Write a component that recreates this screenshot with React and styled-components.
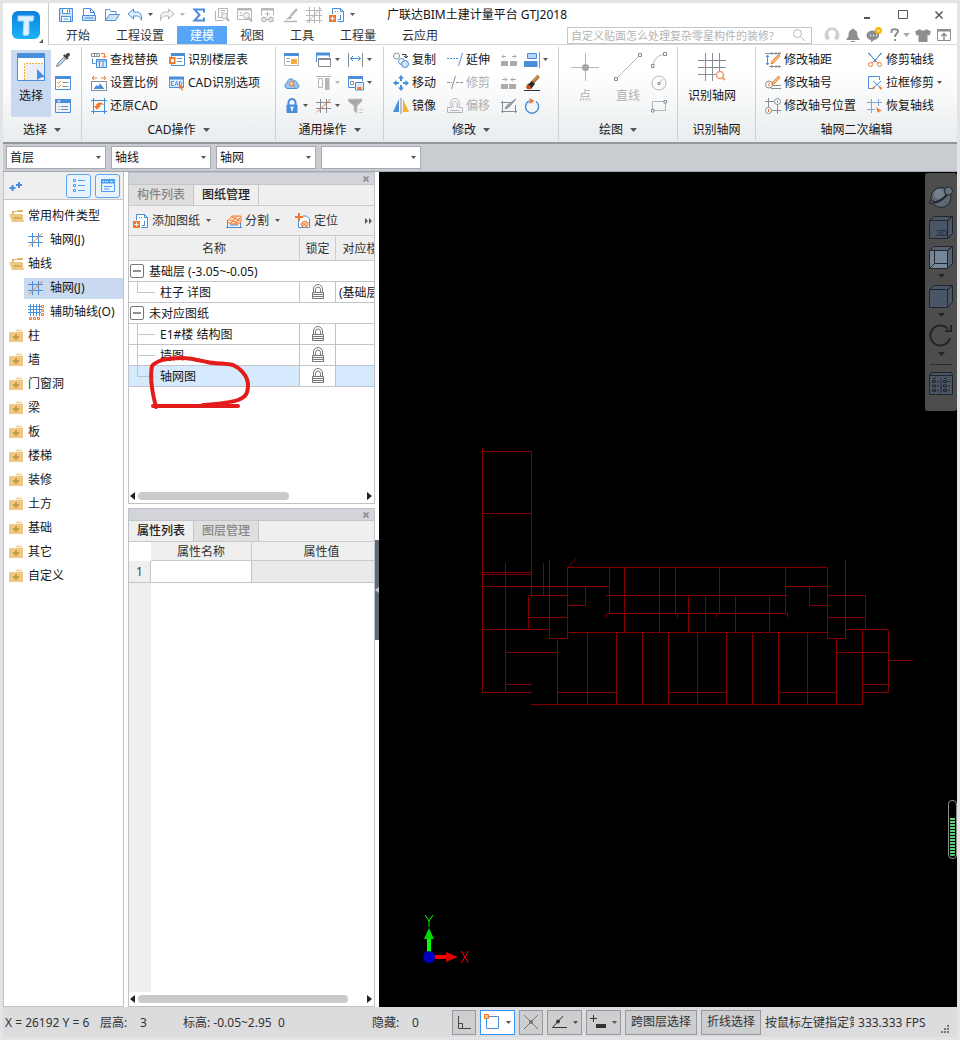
import React from "react"
import styled, { createGlobalStyle } from "styled-components"

const BLUE = "#4a8edb"
const GREY = "#868d94"
const PALE = "#b4b6b9"
const ORANGE = "#f0782c"

const GlobalStyle = createGlobalStyle`
  * {
    box-sizing: border-box;
  }
  body {
    margin: 0;
    font-family: "Noto Sans", "Noto Sans CJK SC", sans-serif;
    font-size: 12px;
    line-height: 20px;
    color: #161616;
  }
  button, input, select {
    font: inherit;
    color: inherit;
    margin: 0;
    padding: 0;
    border: 0;
    background: none;
  }
  svg {
    display: block;
    flex: none;
  }
`

/* ---------- icons, all on a 16px grid ---------- */

const icons = {
  save: (
    <g fill="none" stroke={BLUE}>
      <path d="M1.5 1.5h13v13h-13z" fill="#cfe2f8" />
      <path d="M4.5 1.5h7v5h-7zM3.5 9.5h9v5h-9z" fill="#fff" />
      <path d="M9.5 2.5v3M5.5 12h5" />
    </g>
  ),
  print: (
    <g fill="none" stroke={BLUE}>
      <path d="M2.5 8.5v-7h7l4 4v3" fill="#fff" />
      <path d="M9.5 1.5v4h4" />
      <path d="M1.5 8.5h13v5h-13z" fill="#cfe2f8" />
      <path d="M3.5 11h9" />
    </g>
  ),
  open: (
    <g fill="none" stroke={BLUE} strokeLinejoin="round">
      <path d="M1.5 13.5v-11h4l1.5 2h5v3" />
      <path d="M1.5 13.5l4-6h10l-4 6z" fill="#cfe2f8" />
    </g>
  ),
  undo: <path d="M1 7l5.5-5v3h3c3.5 0 5.500 2.5 5 8.5-1-3.5-2.5-4.5-5-4.5h-3v3z" fill="#e3effc" stroke={BLUE} strokeLinejoin="round" />,
  redo: <path d="M15 7L9.5 2v3h-3C3 5 1 7.5 1.5 13.5c1-3.5 2.5-4.5 5-4.5h3v3z" fill="#f4f4f4" stroke={PALE} strokeLinejoin="round" />,
  sigma: <path d="M13 5.5V2.500H3.500L8.500 8l-5 5.500H13v-3" fill="none" stroke={BLUE} strokeWidth="2" />,
  calcFind: (
    <g fill="none" stroke={PALE}>
      <path d="M4.5 1.500h9v9M1.5 4v9.5h8M4.5 1.5v9h4M6.5 3.5h5M6.5 5.5h2" />
      <circle cx="10.5" cy="9" r="3" fill="#eee" />
      <path d="M12.5 11l2.5 3" strokeWidth="2" />
    </g>
  ),
  tableFind: (
    <g fill="none" stroke={PALE}>
      <path d="M.5 1.5h14v11H.5z" />
      <path d="M1 2.5h13" strokeWidth="2" />
      <path d="M2.5 6h3M2.5 8.5h3" />
      <circle cx="9.5" cy="8.5" r="3" fill="#f2f2f2" />
      <path d="M12 11l3 3.5" strokeWidth="2" />
    </g>
  ),
  tableView: (
    <g fill="none" stroke={PALE}>
      <path d="M1.5 9V1.5h12v7" />
      <path d="M2 2.5h11" strokeWidth="2" />
      <path d="M7.5 4.5v5M5 7h5" />
      <circle cx="4" cy="12.5" r="2.5" fill="#ddd" />
      <circle cx="11" cy="12.5" r="2.5" fill="#ddd" />
      <path d="M6 12.5h3" />
    </g>
  ),
  brush: (
    <g fill="none" stroke={PALE}>
      <path d="M14 2L8 8.5" strokeWidth="2.5" />
      <path d="M8 8.5l-3 3 4-1M1 14.5h13" strokeWidth="1.5" />
    </g>
  ),
  gridPale: <path d="M3.5 0v16M8.5 0v16M13.5 0v16M0 3.500h16M0 8.5h16M0 13.5h16M1 16L15 1" fill="none" stroke={PALE} />,
  addPage: (
    <g fill="none" stroke={BLUE}>
      <path d="M3.5 7V1.5h8l3 3v10h-6" fill="#fff" />
      <path d="M11.5 1.5v3h3" />
      <path d="M6 4.5h3" strokeDasharray="1 1" />
      <path d="M11.5 8v4.5H9" />
      <path d="M0 8h7v7H0z" fill={ORANGE} stroke="none" />
      <path d="M3.5 9.5v4M1.5 11.5h4" stroke="#fff" />
    </g>
  ),
  dropper: (
    <g>
      <path d="M14.5 1.5c-1.5-1-3 0-4 1.5l-1-.7L8 3.800l4 4 1.5-1.5-.7-1c1.5-1 3-2.5 1.7-3.800z" fill="#444" />
      <path d="M8.5 5.5l2 2-6 6-3 1 1-3z" fill="#b9d4f5" stroke="#7e868e" />
    </g>
  ),
  listCheck: (
    <g fill="none" stroke={BLUE}>
      <path d="M.5 1.5h15v13H.5z" fill="#fff" />
      <path d="M0 2.5h16" strokeWidth="3" />
      <path d="M7.5 7.5h6M7.5 11.5h6" stroke={GREY} />
      <path d="M2.5 7l1 1.5L6 6M2.5 11l1 1.5L6 10" stroke="#eda035" />
    </g>
  ),
  listMenu: (
    <g fill="none" stroke={BLUE}>
      <path d="M.5 1.5h15v13H.5z" fill="#e9f2fc" />
      <path d="M0 3h16" strokeWidth="4" />
      <path d="M2 2.5h4l-2 2z" fill="#fff" stroke="none" />
      <path d="M6 8.5h7M6 11.5h7M3.5 8.5h1M3.5 11.5h1" stroke={GREY} />
    </g>
  ),
  findReplace: (
    <g fill="none" stroke={GREY}>
      <path d="M.5 1.5h8v3h-8zM3.5 1.5v3M6 1.5v3" />
      <path d="M10 1.5h3.5v4M11.5 4l2 2 2-2" stroke={ORANGE} />
      <path d="M5.5 7.5h10v8h-10zM5 9h11M8.5 9v6.5M12 9v6.5" stroke={BLUE} fill="#dceafa" />
      <path d="M1.5 6.5v5h3" stroke={BLUE} />
    </g>
  ),
  scale: (
    <g fill="none" stroke={ORANGE}>
      <path d="M1 3h5M10 3h5M3 1L1 3l2 2M13 1l2 2-2 2" />
      <path d="M.5 6.5h15v9H.5z" stroke={GREY} fill="#fff" />
      <path d="M2.5 14l3-4L7 11.5l2-3 4.5 5.5z" fill={BLUE} stroke="none" />
    </g>
  ),
  restore: (
    <g fill="none" stroke={BLUE}>
      <path d="M2.5 0v16M13.5 0v16M0 2.5h16M0 13.5h16" />
      <path d="M5.500 11.5L3 8h2c0-4 6-5 8-1-2-1-4-.5-4.5 1H10z" fill={ORANGE} stroke="none" />
    </g>
  ),
  floorTable: (
    <g fill="none" stroke={BLUE}>
      <path d="M2.5 1.5h13v12h-13z" fill="#fff" />
      <path d="M2 2.5h14" strokeWidth="3" />
      <path d="M8 6.5h5M8 9.5h5" stroke={GREY} />
      <path d="M0 5h6.5v7H0z" fill={ORANGE} stroke="none" />
      <path d="M2 7h3v3H2z" fill="#fff" stroke="none" />
    </g>
  ),
  cadOption: (
    <g fill="none" stroke={BLUE}>
      <path d="M.5 2.5h14v10H.5z" fill="#dceafa" />
      <path d="M0 3h15" strokeWidth="3" />
      <path d="M5 6.5H2.5v4H5M6 10.5l1.5-4 1.500 4M10.5 6.5v4c3 0 3-4 0-4z" />
      <path d="M10 9l5 3-2 .5 1 2.5-1.5.5-1-2.5-1.5 1z" fill={ORANGE} stroke="none" />
    </g>
  ),
  panelOrange: (
    <g fill="none" stroke={PALE}>
      <path d="M.5 1.5h14v12H.5z" fill="#fff" />
      <path d="M0 2.5h15" stroke={BLUE} strokeWidth="3" />
      <path d="M2.5 6.5h3M2.5 9.5h3" stroke={GREY} />
      <path d="M7 7h6v5H7z" fill="#f8ab3c" stroke="none" />
    </g>
  ),
  cloudFind: (
    <g>
      <path d="M4 13.5c-4 0-4-5-.8-5.5C3 4 8 2 10 6c3-.5 3.5 2 3 2.500 2.5.5 2.5 5-.5 5z" fill="#9dc3f0" stroke={BLUE} />
      <circle cx="7.5" cy="8.5" r="2" fill="#f6d2b6" stroke={ORANGE} />
      <path d="M9 10l2.5 2" stroke={ORANGE} />
    </g>
  ),
  lockBlue: (
    <g>
      <path d="M4.500 7V4.500a3.500 3.500 0 0 1 7 0V7" fill="none" stroke={BLUE} strokeWidth="2" />
      <rect x="2.5" y="6.5" width="11" height="8.500" rx="1" fill={BLUE} />
      <path d="M8 9v4M6.5 9.5h3" stroke="#fff" strokeWidth="1.5" />
    </g>
  ),
  windows: (
    <g fill="none" stroke={BLUE}>
      <path d="M.5 10V1.5h13V5" />
      <path d="M0 2h14" strokeWidth="3" />
      <path d="M2.5 6.5h12v8h-12z" stroke={GREY} fill="#fff" />
      <path d="M2 7h13" stroke={GREY} strokeWidth="2" />
    </g>
  ),
  alignTop: (
    <g fill="none" stroke={PALE}>
      <path d="M0 1.5h15M2.5 3.5h4v9h-4z" />
      <path d="M9 3h4.500v12H9z" fill={PALE} stroke="none" />
    </g>
  ),
  gridSlash: (
    <g fill="none">
      <path d="M4.5 1v14M10.5 1v14M0 4.5h15M0 10.5h15" stroke={GREY} />
      <path d="M1 14.5L14.5 1" stroke={ORANGE} />
    </g>
  ),
  measure: (
    <g fill="none" stroke={BLUE}>
      <path d="M.5 1v14M14.5 1v14" stroke={GREY} />
      <path d="M2 6.5h11M5 4L2.5 6.5 5 9M10 4l2.5 2.5L10 9" />
    </g>
  ),
  savePanel: (
    <g fill="none" stroke={BLUE}>
      <path d="M7 12.5H.5v-11h14V6" fill="#fff" />
      <path d="M0 2.5h15" strokeWidth="3" />
      <path d="M2.5 6.5h3v3h-3z" stroke={GREY} />
      <path d="M7.5 7.5h8V15h-8z" fill="#dceafa" />
      <path d="M9.5 12h4v3h-4z" fill={ORANGE} stroke="none" />
    </g>
  ),
  funnel: <path d="M0 1h14v2L9 8v7l-3-2V8L0 3zM11 11.5h4M11 14.5h4" fill="#a6a8aa" stroke="#c8c8c8" />,
  copy: (
    <g fill="none" stroke={GREY}>
      <circle cx="3.5" cy="4" r="3" />
      <path d="M9 2.5h4v3M11 4l2 2 2-2" stroke="#333" />
      <circle cx="8.5" cy="9.5" r="3" stroke={BLUE} />
      <circle cx="12" cy="12" r="3.5" stroke={BLUE} fill="#cfe2f8" />
    </g>
  ),
  move: (
    <g fill={BLUE}>
      <path d="M8 0l3 3.5H9V6H7V3.500H5zM8 16l3-3.500H9V10H7v2.500H5zM0 8l3.5-3v2H6v2H3.500v2zM16 8l-3.5-3v2H10v2h2.500v2z" />
    </g>
  ),
  mirror: (
    <g>
      <path d="M6 1v13H0z" fill={BLUE} />
      <path d="M10 1v13h6z" fill="#f7b32b" />
      <path d="M8 0v16" stroke={GREY} />
    </g>
  ),
  extend: (
    <g fill="none" stroke={BLUE}>
      <path d="M0 6.5h11" strokeDasharray="2 1" />
      <path d="M15.5 1l-4 13" />
    </g>
  ),
  trim: (
    <g fill="none" stroke="#8b8e92">
      <path d="M0 7.5h5M9 7.5h7" strokeDasharray="3 1" />
      <path d="M8.5 1l-4 13" />
    </g>
  ),
  offset: (
    <g fill="none" stroke={PALE}>
      <path d="M.5 14.5v-5h4C2 4 5 .5 8 .5s6 3.5 3.5 9h4v5z" />
      <path d="M3.5 12.5h9M6.5 9.5c-2-4 0-6 1.5-6s3.5 2 1.5 6" />
    </g>
  ),
  breakTwo: (
    <g fill="#a9abad">
      <path d="M0 9h7v5H0zM9 9h7v5H9z" />
      <path d="M1 4.5h4M11 4.5h4M3 2.5l-2 2 2 2M13 2.5l2 2-2 2" fill="none" stroke="#a9abad" />
    </g>
  ),
  joinTwo: (
    <g fill="#a9abad">
      <path d="M0 9h7v5H0zM8 9h7v5H8z" />
      <path d="M1 4.5h5M10 4.5h5M4 2.5l2 2-2 2M12 2.500l-2 2 2 2" fill="none" stroke="#a9abad" />
    </g>
  ),
  editFrame: (
    <g fill="none" stroke={GREY}>
      <path d="M0 4.500h10M1.5 3v12M0 13.5h16M14.5 7v8" />
      <path d="M15 1L8 9l-4 2 2-3.500z" fill="#a9abad" />
    </g>
  ),
  alignRight: (
    <g>
      <path d="M3.500 1.5h9v5h-9z" fill="#b7d3f5" stroke={BLUE} />
      <path d="M0 9h13.500v6H0z" fill={BLUE} />
      <path d="M15.5 0v16" stroke={GREY} />
    </g>
  ),
  broom: (
    <g>
      <path d="M14.5 1L8 8" stroke="#a9733a" strokeWidth="3.5" />
      <path d="M15 0L8 7" stroke="#f3b45a" />
      <path d="M8 6l3 3-4 5H3v-4z" fill="#2c2c2c" />
      <path d="M3 9.5l3 1 1 3c-2 1.5-4 1-5-1z" fill="#d9481e" />
      <path d="M0 15.5h16" stroke="#333" />
    </g>
  ),
  rotate: (
    <g>
      <path d="M5 3a6.500 6.500 0 1 0 7 .5" fill="none" stroke={BLUE} strokeWidth="1.5" />
      <path d="M5.500 0l5 3-5 3z" fill={ORANGE} />
    </g>
  ),
  arc: (
    <g fill="none" stroke={PALE}>
      <path d="M2 13C3 7 7 3 13 2.5" />
      <path d="M.5 12.5H3v3H.5zM12.5.5h3v3h-3z" fill="#fff" stroke={GREY} />
    </g>
  ),
  circle: (
    <g fill="none" stroke={PALE}>
      <circle cx="8" cy="8" r="7" />
      <path d="M8 8l4-4" />
      <path d="M7 7.500h2v2H7z" stroke={GREY} />
    </g>
  ),
  rect: (
    <g fill="none" stroke={PALE}>
      <path d="M1.5 3.5h13v9h-13z" />
      <path d="M.5 11.500H3V14H.5zM13 2.500h2.500V5H13z" fill="#fff" stroke={GREY} />
    </g>
  ),
  axisDistance: (
    <g fill="none" stroke={GREY}>
      <path d="M0 1.5h16M7 0v3M11 0v3M14 0v3M4 14.5h12M7 13v3M11 13v3M14 13v3" />
      <path d="M2.5 3v10M1 5l1.5-2L4 5M1 11l1.5 2L4 11" stroke={BLUE} />
      <path d="M13.5 2.5L15 4l-6.500 7L6 12l.8-2.500z" fill="#f8c77e" stroke={ORANGE} />
    </g>
  ),
  axisNumber: (
    <g fill="none" stroke={GREY}>
      <circle cx="4" cy="9.5" r="3.5" fill="#fff" />
      <path d="M4 7.5v4" stroke={ORANGE} />
      <path d="M7.5 10.5H16M6 13.5h10" />
      <path d="M13.5 1L15 2.500l-5.500 6L7 9.500 7.800 7z" fill="#f8c77e" stroke={ORANGE} />
    </g>
  ),
  axisPosition: (
    <g fill="none" stroke={GREY}>
      <path d="M0 3.5h9M3.5 0v9M12.5 6v10M7 12.5h9" />
      <circle cx="12.5" cy="3.5" r="3" fill="#fff" />
      <circle cx="3.5" cy="12.5" r="3" fill="#fff" />
      <path d="M12.5 2v3M3.5 11v3" stroke={ORANGE} />
    </g>
  ),
  scissors: (
    <g fill="none" stroke={BLUE}>
      <path d="M1 1l10 10M15 1L5 11M2 1l7 9M14 1L7 10" />
      <circle cx="3.5" cy="12.5" r="2" stroke={ORANGE} />
      <circle cx="12.5" cy="12.5" r="2" stroke={ORANGE} />
      <path d="M5 11l2-2M11 11L9 9" stroke={ORANGE} />
    </g>
  ),
  frameCut: (
    <g fill="none" stroke={BLUE}>
      <path d="M5 13.5H1.5v-12h11V5" />
      <path d="M6 6l8 7M14 6l-8 7" />
      <path d="M5.5 14l2-2M14.5 14l-2-2" stroke={ORANGE} strokeWidth="2" />
    </g>
  ),
  axisRestore: (
    <g fill="none" stroke="#7ea6d6">
      <path d="M4.5 1v14M11.5 1v7M0 4.5h15M0 11.5h8" />
      <path d="M9 9l6 4-2.5.5L11 15z" fill={ORANGE} stroke="none" />
    </g>
  ),
  axis: (
    <g fill="none" stroke={BLUE}>
      <path d="M4.5 1v14M10.5 1v14M0 4.5h15M0 10.5h15" />
      <path d="M1 14.5L14.5 1" stroke={ORANGE} />
    </g>
  ),
  axisAux: (
    <g fill="none" stroke={BLUE}>
      <path d="M2.500 0v12M5.5 0v12M8.5 0v12M11.5 0v12M0 2.5h13M0 5.5h13M0 8.5h13" />
      <path d="M13.5 1.5h2v2h-2zM13.5 5.5h2v2h-2zM13.5 9.5h2v2h-2zM1.5 13.5h2v2h-2zM5.5 13.5h2v2h-2zM9.5 13.5h2v2h-2z" stroke={ORANGE} />
    </g>
  ),
  folderOpen: (
    <g>
      <path d="M3 3h5l1-1h5v10H3z" fill="#e0b46c" />
      <path d="M5 4h9v3H5z" fill="#fff" />
      <path d="M0 6h13l2 8H3z" fill="#efc883" />
      <path d="M5 9h7v2H5z" fill="#d5a85c" />
    </g>
  ),
  folder: (
    <g>
      <path d="M7 1.500h6v2H7z" fill="#f4d9a8" />
      <path d="M0 4h14v10H0z" fill="#efc883" />
      <path d="M7 6v6M4 9h6" stroke="#c69a49" strokeWidth="2" />
    </g>
  ),
  plusPlus: <path d="M3.500 7v6M.5 10h6M10 4v6M7 7h6" fill="none" stroke={BLUE} strokeWidth="2" />,
  listView: (
    <g fill="none" stroke="#4f9ff0">
      <path d="M2.5 1.500h2v2h-2zM2.5 6.500h2v2h-2zM2.5 11.500h2v2h-2zM7 2.500h7M7 7.500h7M7 12.500h7" />
    </g>
  ),
  panelView: (
    <g fill="none" stroke="#4f9ff0">
      <path d="M1.5 1.5h13v12h-13z" />
      <path d="M1 3.5h14" strokeWidth="4" />
      <path d="M3 3.500h1M5 3.500h1M7 3.500h1M10.5 3.500h2" stroke="#fff" />
      <path d="M4 8.5h8M4 11h5" />
    </g>
  ),
  split: (
    <g fill="none" stroke={BLUE}>
      <path d="M1.5 7v7.500h13V7" />
      <path d="M0 14.5h16M4 12h8" />
      <path d="M1 9l5-6h9v6l-3 2H6z" fill="#fbe0c9" stroke={ORANGE} />
      <path d="M4 7l8 3M6 4l8 4M5 10l6-7M9 11l5-6" stroke={ORANGE} />
    </g>
  ),
  locate: (
    <g fill="none" stroke={BLUE}>
      <path d="M3.5 6v8.500h11V6l-3-3H8" fill="#fff" />
      <path d="M4 0v8M0 4h8" stroke={ORANGE} strokeWidth="2" />
      <path d="M6 12c0-4 6-5 7-2 1 3-3 5-5 4z" fill="#fbe0c9" stroke={ORANGE} />
      <path d="M7 13l5-4M7 10l5 3" stroke={ORANGE} />
    </g>
  ),
  lock: (
    <g fill="none" stroke="#777">
      <path d="M3.5 8V5a4 4 0 0 1 9 0v3M5.5 8V5.500a2 2 0 0 1 5 0V8" />
      <path d="M2.500 8.500h11v6h-11zM3 10.500h10M3 12.500h10" />
    </g>
  ),
  ortho: <path d="M2.5 2v12.500H15M2.5 9.500h4v5" fill="none" stroke="#444" />,
  snap: (
    <g fill="none" stroke={BLUE}>
      <path d="M2.5 2.5h12v12h-12z" />
      <path d="M.5.5h4v4h-4z" fill="#fac39b" stroke={ORANGE} />
    </g>
  ),
  cross: (
    <g stroke="#777" fill="#777">
      <path d="M1 1l14 14M15 1L1 15" />
      <circle cx="8" cy="8" r="1.5" />
    </g>
  ),
  angle: (
    <g stroke="#333" fill="#333">
      <path d="M12 2L1.500 13.500H16" fill="none" />
      <circle cx="7" cy="7.500" r="1.500" />
    </g>
  ),
  plusInput: (
    <g>
      <path d="M3.5 1v7M0 4.5h7" stroke="#333" />
      <path d="M6 10h10v4H6z" fill="#333" />
    </g>
  ),
  avatar: (
    <g>
      <circle cx="8" cy="8" r="7.5" fill="#cfcfcf" />
      <path d="M8 3c-5 0-4 6-2 8l-3 2.500c3 2.500 7 2.500 10 0L10 11c2-2 3-8-2-8z" fill="#fff" />
    </g>
  ),
  bell: <path d="M8 1l1 1.5c3 1 3.5 3 3.5 7l2 2.5v1h-13v-1l2-2.5c0-4 .5-6 3.5-7zM6 14h4v1H6z" fill="#8e8e8e" />,
  chat: (
    <g>
      <path d="M7 3.5c8 0 8 9 1 9.500L5 15.500V13C-1.500 12-1 3.500 7 3.500z" fill="#8e8e8e" />
      <path d="M4 8.500h1M7 8.500h1M10 8.500h1" stroke="#fff" strokeWidth="1.5" />
      <circle cx="12.5" cy="3.5" r="3.5" fill="#f7b500" />
      <path d="M11 2.5l1.5 2 1.5-2" stroke="#fff" fill="none" />
    </g>
  ),
  help: (
    <g fill="none" stroke="#8e8e8e" strokeWidth="2">
      <path d="M4.500 6V4c0-2.500 6.500-2.500 6.500 0 0 2.500-3 2.500-3 6M8 12v2" />
    </g>
  ),
  shirt: <path d="M5 2c1 2 5 2 6 0l5 2.5-1.500 4-2-.5v7h-9V8l-2 .5L0 4.500z" fill="#8e8e8e" />,
  upBox: (
    <g fill="none" stroke="#8e8e8e">
      <path d="M1.5 2.5h13v11h-13z" />
      <path d="M1 3.5h14" strokeWidth="2" />
      <path d="M8 13V7M5.500 9L8 6.500 10.500 9" strokeWidth="1.5" />
    </g>
  ),
  find: (
    <g fill="none" stroke="#b5b5b5">
      <circle cx="6.5" cy="6.5" r="4" />
      <path d="M9.5 9.5L14 14" />
    </g>
  ),
  minimise: <path d="M5 11h6" stroke="#555" strokeWidth="2" />,
  maximise: <path d="M3.5 3.5h9v8h-9z" fill="none" stroke="#555" />,
  close: <path d="M4.5 4.500l7 7M11.5 4.5l-7 7" stroke="#555" strokeWidth="1.5" />,
}

const Icon = ({ name }) => (
  <svg width="16" height="16" viewBox="0 0 16 16" aria-hidden="true">
    {icons[name]}
  </svg>
)

const Caret = ({ color = "#555", big }) => (
  <svg width={big ? 7 : 5} height={big ? 4 : 3} viewBox="0 0 7 4" aria-hidden="true">
    <path d="M0 0h7L3.5 4z" fill={color} />
  </svg>
)

/* ---------- frame and title ---------- */

const Frame = styled.div`
  display: flex;
  flex-direction: column;
  min-height: 100vh;
  border: 3px solid #e4e4e6;
  background: #fff;
`

const Header = styled.header`
  display: flex;
`

const LogoButton = styled.button`
  width: 46px;
  display: flex;
  align-items: center;
  justify-content: center;
  padding: 3px 0 0 3px;
  border-right: 1px solid #c8c8c8;
`

const HeaderRows = styled.div`
  flex: 1;
  min-width: 0;
  border-bottom: 1px solid #d6d6d6;
`

const TitleRow = styled.div`
  display: flex;
  align-items: center;
  height: 23px;
  padding-left: 5px;
`

const QuickButton = styled.button`
  display: flex;
  align-items: center;
  justify-content: center;
  width: ${(p) => (p.$narrow ? 9 : 23)}px;
  height: 20px;
`

const Title = styled.h1`
  flex: 1;
  margin: 0 0 0 30px;
  font-size: 12px;
  font-weight: 400;
  color: #111;
  white-space: nowrap;
`

const WindowButton = styled.button`
  display: flex;
  align-items: center;
  justify-content: center;
  width: 36px;
  height: 20px;
`

const TabRow = styled.div`
  display: flex;
  align-items: center;
  height: 18px;
  padding: 0 5px 0 4px;
`

const RibbonTab = styled.button`
  height: 18px;
  padding: 2px 13px 0;
  line-height: 16px;
  white-space: nowrap;
  color: ${(p) => (p.$active ? "#fff" : "#333")};
  background: ${(p) => (p.$active ? "#57a5f6" : "transparent")};
  border-radius: 1px 1px 0 0;
`

const SearchBox = styled.label`
  display: flex;
  align-items: center;
  width: 245px;
  height: 17px;
  margin: 0 12px 0 auto;
  padding: 0 4px 0 3px;
  border: 1px solid #c6c6c6;
  font-size: 11px;
  input {
    flex: 1;
    min-width: 0;
    height: 15px;
    outline: 0;
    line-height: 15px;
  }
  input::placeholder {
    color: #b4b4b4;
    opacity: 1;
  }
`

const UserTools = styled.div`
  display: flex;
  align-items: center;
  gap: 5px;
`

const ToolButton = styled.button`
  display: flex;
  align-items: center;
`

/* ---------- ribbon ---------- */

const Ribbon = styled.div`
  display: flex;
  height: 99px;
  padding: 2px 0;
  border-bottom: 2px solid #92979f;
  background: linear-gradient(#fff 30%, #e8ecee);
`

const Group = styled.section`
  display: flex;
  flex-direction: column;
  flex: ${(p) => (p.$grow ? "1" : `0 0 ${p.$width}px`)};
  border-right: ${(p) => (p.$grow ? 0 : 1)}px solid #cdcfd1;
`

const GroupBody = styled.div`
  display: flex;
  gap: ${(p) => p.$gap}px;
  height: 73px;
  padding: 1px 0 0 ${(p) => p.$left}px;
`

const GroupLabel = styled.button`
  display: flex;
  align-items: center;
  justify-content: center;
  gap: 7px;
  height: 20px;
  width: 100%;
`

const Column = styled.div`
  display: flex;
  flex-direction: column;
  align-items: flex-start;
`

const IconColumns = styled.div`
  display: flex;
  gap: 7px;
`

const CommandButton = styled.button`
  display: flex;
  align-items: center;
  gap: 3px;
  height: 23px;
  white-space: nowrap;
  color: ${(p) => (p.disabled ? "#b0b0b0" : "#161616")};
`

const BigButton = styled.button`
  display: flex;
  flex-direction: column;
  align-items: center;
  gap: 5px;
  width: ${(p) => p.$width}px;
  height: 67px;
  margin-top: 2px;
  padding-top: 3px;
  white-space: nowrap;
  color: ${(p) => (p.disabled ? "#b0b0b0" : "#161616")};
  background: ${(p) => (p.$active ? "#c9d9f0" : "transparent")};
`

const Command = ({ icon, label, title, caret, disabled, caretColor }) => (
  <CommandButton disabled={disabled} aria-label={title}>
    <Icon name={icon} />
    {label}
    {caret && <Caret color={caretColor} />}
  </CommandButton>
)

const RibbonGroup = ({ name, width, left = 9, gap = 11, caret, grow, children }) => (
  <Group $width={width} $grow={grow}>
    <GroupBody $left={left} $gap={gap}>
      {children}
    </GroupBody>
    <GroupLabel>
      {name}
      {caret && <Caret big />}
    </GroupLabel>
  </Group>
)

/* ---------- combo bar ---------- */

const ComboBar = styled.div`
  display: flex;
  gap: 5px;
  padding: 2px 3px;
  height: 28px;
  background: #c9ccd1;
  border-bottom: 1px solid #a3a9b1;
`

const Combo = styled.div`
  display: grid;
  align-items: center;
  width: 100px;
  height: 23px;
  border: 1px solid #a7abb0;
  background: #fff;
  > * {
    grid-area: 1 / 1;
  }
  select {
    appearance: none;
    width: 100%;
    height: 21px;
    padding: 0 18px 0 3px;
    outline: 0;
  }
  svg {
    justify-self: end;
    margin-right: 4px;
    pointer-events: none;
  }
`

/* ---------- workspace ---------- */

const Workspace = styled.main`
  flex: 1;
  display: grid;
  grid-template-columns: 121px 247px 1fr;
  column-gap: 4px;
  min-height: 600px;
`

const Sidebar = styled.nav`
  border: 1px solid #bfc2c8;
  border-top: 0;
`

const SidebarTools = styled.div`
  display: flex;
  align-items: center;
  gap: 4px;
  height: 28px;
  padding: 0 3px 0 5px;
  background: #efefef;
  border-bottom: 1px solid #c4c6ca;
`

const AddButton = styled.button`
  margin-right: auto;
`

const ViewButton = styled.button`
  display: flex;
  align-items: center;
  justify-content: center;
  width: 25px;
  height: 24px;
  border: 1px solid #5aa6f4;
  border-radius: 3px;
  background: #e9f3fd;
`

const Tree = styled.ul`
  list-style: none;
  margin: 0;
  padding: 4px 0 0;
`

const TreeItem = styled.li`
  display: flex;
  height: 24px;
  align-items: center;
  padding-left: ${(p) => (p.$child ? 20 : 0)}px;
`

const TreeButton = styled.button`
  flex: 1;
  display: flex;
  align-items: center;
  gap: ${(p) => (p.$child ? 6 : 3)}px;
  height: 21px;
  padding-left: ${(p) => (p.$child ? 4 : 5)}px;
  white-space: nowrap;
  background: ${(p) => (p.$active ? "#c9d9f0" : "transparent")};
`

const Docks = styled.div`
  position: relative;
  display: flex;
  flex-direction: column;
  gap: 4px;
  min-width: 0;
`

const Dock = styled.section`
  flex: ${(p) => p.$share} 1 0;
  display: flex;
  flex-direction: column;
  min-width: 0;
  overflow: hidden;
  border: 1px solid #bfc2c8;
`

const DockBar = styled.div`
  display: flex;
  justify-content: flex-end;
  align-items: center;
  height: 12px;
  padding-right: 4px;
  background: #d3d4d9;
  border-bottom: 1px solid #c3c5ca;
`

const DockTabs = styled.div`
  display: flex;
  height: 21px;
  background: #efefef;
  border-bottom: 1px solid #c9cbcf;
`

const DockTab = styled.button`
  width: 65px;
  border-right: 1px solid #c3c5ca;
  font-weight: 500;
  color: ${(p) => (p.$active ? "#222" : "#888")};
  background: ${(p) => (p.$active ? "#efefef" : "#dfdfdf")};
`

const DockTools = styled.div`
  display: flex;
  align-items: center;
  height: 30px;
  padding: 0 1px 0 4px;
  gap: 12px;
  color: #333;
  background: #efefef;
  border-bottom: 1px solid #c9cbcf;
  button {
    display: flex;
    align-items: center;
    gap: 3px;
    white-space: nowrap;
  }
  button:last-child {
    margin-left: auto;
  }
`

const CaretSlot = styled.span`
  display: flex;
  justify-content: center;
  width: 11px;
`

const DockBody = styled.div`
  flex: 1;
  display: flex;
  overflow: hidden;
`

const Table = styled.table`
  table-layout: fixed;
  flex: none;
  border-spacing: 0;
  width: ${(p) => p.$width}px;
  align-self: flex-start;
  white-space: nowrap;
  th {
    height: ${(p) => p.$head}px;
    padding: 2px 0 0;
    font-weight: 400;
    line-height: 16px;
    color: #333;
    background: #efefef;
    border-right: 1px solid #c9cbcf;
    border-bottom: 1px solid #c9cbcf;
  }
  td {
    height: 21px;
    padding: 0;
    border-right: 1px solid #bfc2c8;
    border-bottom: 1px solid #c3c5ca;
  }
  td > svg {
    margin: 0 auto;
  }
`

const DrawingRow = styled.tr`
  td {
    background: ${(p) => (p.$active ? "#d6eafd" : "#fff")};
  }
  td:nth-child(2) {
    background: #fff;
  }
`

const NameCell = styled.div`
  display: flex;
  align-items: center;
  height: 20px;
  gap: 5px;
`

const CellText = styled.span`
  padding: 2px 0 0 ${(p) => (p.$inset ? 3 : 0)}px;
  line-height: 18px;
`

const Toggle = styled.button`
  display: flex;
  align-items: center;
  justify-content: center;
  width: 14px;
  height: 14px;
  margin-left: 1px;
  border: 1px solid #777;
  border-radius: 2px;
  background: #fff;
`

const GutterTable = styled(Table)`
  th:first-child {
    background: #fff;
    border: 0;
  }
  td {
    height: 22px;
    padding-top: 1px;
  }
  td:first-child {
    text-align: center;
    background: #efefef;
    color: #444;
  }
  td:last-child {
    background: #eaeaea;
  }
`

const Gutter = styled.div`
  flex: 1;
  width: 22px;
  background: #efefef;
`

const HScroll = styled.div`
  display: flex;
  align-items: center;
  gap: 3px;
  height: 14px;
  padding: 0 2px 0 1px;
  div {
    flex: 1;
  }
  i {
    display: block;
    width: ${(p) => p.$thumb}%;
    height: 8px;
    border-radius: 4px;
    background: #cacbcb;
  }
`

const RedMark = styled.svg`
  position: absolute;
  left: 20px;
  top: 182px;
  pointer-events: none;
`

const SplitHandle = styled.button`
  position: absolute;
  left: 247px;
  top: 368px;
  display: flex;
  align-items: center;
  width: 4px;
  height: 100px;
  background: #5f6a76;
`

const Viewport = styled.div`
  position: relative;
  overflow: hidden;
  background: #000;
`

const Drawing = styled.svg`
  position: absolute;
  left: 101px;
  top: 268px;
`

const Gizmo = styled.svg`
  position: absolute;
  left: 41px;
  bottom: 40px;
`

const ViewTools = styled.div`
  position: absolute;
  top: 1px;
  right: 0;
  display: flex;
  flex-direction: column;
  align-items: center;
  width: 32px;
  height: 238px;
  padding-top: 12px;
  border-radius: 3px;
  background: #4d4d4d;
  button {
    display: flex;
    flex-direction: column;
    align-items: center;
    gap: 5px;
    margin-bottom: 6px;
  }
  hr {
    width: 22px;
    margin: 2px 0 6px;
    border: 0;
    border-top: 1px solid #2a2d31;
  }
`

const Meter = styled.div`
  position: absolute;
  right: 0;
  top: 628px;
  width: 9px;
  height: 59px;
  padding: 17px 1px 2px 1px;
  border: 1px solid #8a8a8a;
  border-radius: 4px;
  background: repeating-linear-gradient(#5fd07b 0 2px, #000 2px 3px) content-box;
`

/* ---------- status bar ---------- */

const StatusBar = styled.footer`
  display: flex;
  align-items: center;
  gap: 4px;
  height: 30px;
  padding: 0 7px 0 2px;
  color: #333;
  white-space: nowrap;
  background: #dcdcdf;
`

const StatusText = styled.span`
  flex: 0 0 ${(p) => (p.$width ? `${p.$width}px` : "auto")};
  padding-top: 2px;
  overflow: hidden;
`

const StatusButton = styled.button`
  flex: none;
  display: flex;
  align-items: center;
  justify-content: center;
  gap: 6px;
  height: 25px;
  padding: 0 ${(p) => (p.$text ? 5 : 3)}px;
  border: 1px solid ${(p) => (p.$active ? "#3a94f5" : "#97999c")};
  background: ${(p) => (p.$active ? "#fff" : "#cdced0")};
`

const Grip = styled.svg`
  margin: 0 0 3px auto;
  align-self: flex-end;
`

/* ---------- data ---------- */

const tabs = ["开始", "工程设置", "建模", "视图", "工具", "工程量", "云应用"]

const combos = [
  ["楼层", "首层"],
  ["构件大类", "轴线"],
  ["构件类型", "轴网"],
  ["构件", ""],
]

const tree = [
  { label: "常用构件类型", icon: "folderOpen" },
  { label: "轴网(J)", icon: "axis", child: true },
  { label: "轴线", icon: "folderOpen" },
  { label: "轴网(J)", icon: "axis", child: true, active: true },
  { label: "辅助轴线(O)", icon: "axisAux", child: true },
  ...["柱", "墙", "门窗洞", "梁", "板", "楼梯", "装修", "土方", "基础", "其它", "自定义"].map((label) => ({
    label,
    icon: "folder",
  })),
]

const drawings = [
  { group: "基础层 (-3.05~-0.05)" },
  { name: "柱子 详图", floor: "(基础层", last: true },
  { group: "未对应图纸" },
  { name: "E1#楼 结构图" },
  { name: "墙图" },
  { name: "轴网图", last: true, active: true },
]

// [x, y1, y2]
const verticals = [
  [482, 448, 693], [531, 451, 598], [505, 563, 693], [543, 563, 596], [549, 560, 639],
  [567, 567, 639], [585, 586, 606], [528, 596, 630], [609, 567, 614], [624, 567, 633],
  [659, 567, 633], [675, 567, 614], [688, 595, 633], [705, 595, 633], [557, 638, 705],
  [587, 632, 705], [616, 632, 705], [642, 632, 705], [668, 632, 705], [697, 632, 705],
  [719, 567, 614], [785, 567, 614], [827, 568, 639], [845, 560, 639], [865, 595, 630],
  [809, 586, 606], [735, 595, 633], [769, 595, 633], [726, 632, 705], [752, 632, 705],
  [778, 632, 705], [807, 632, 705], [836, 638, 705], [862, 629, 705], [888, 630, 693],
  [606, 614, 617], [677, 614, 618], [716, 614, 617], [787, 614, 617],
]

// [y, x1, x2]
const horizontals = [
  [451, 482, 532], [513, 482, 532], [572, 482, 532], [574, 482, 532], [586, 482, 610],
  [595, 529, 568], [595, 606, 788], [605, 567, 586], [617, 528, 568], [629, 482, 550],
  [638, 549, 568], [613, 607, 788], [632, 567, 828], [652, 505, 558], [684, 505, 532],
  [692, 482, 532], [692, 557, 617], [692, 668, 727], [692, 778, 837], [704, 531, 863],
  [567, 567, 827], [586, 785, 828], [605, 809, 828], [595, 827, 866], [617, 827, 866],
  [629, 845, 888], [638, 827, 846], [652, 836, 889], [660, 888, 913], [684, 862, 889],
  [692, 862, 889],
]

/* ---------- pieces ---------- */

const Logo = () => (
  <svg width="36" height="36" viewBox="0 0 36 36" aria-hidden="true">
    <defs>
      <linearGradient id="logo" x1="0" y1="0" x2="0" y2="1">
        <stop offset="0" stopColor="#0f7fe0" />
        <stop offset="1" stopColor="#18b4f5" />
      </linearGradient>
    </defs>
    <rect x="3" y="3" width="28" height="28" rx="6" fill="url(#logo)" />
    <path d="M9 8h16l-1 5h-4v13c-1 2-6 2-6 0l1-13H9z" fill="#dff1fe" stroke="#9ad6fb" strokeLinejoin="round" />
    <path d="M34 31v4h-4z" fill="#555" />
  </svg>
)

const SelectArt = () => (
  <svg width="28" height="28" viewBox="0 0 28 28" aria-hidden="true">
    <path d="M.5.5h27v27H.5z" fill="#fff" stroke={BLUE} />
    <path d="M0 0h28v5H0z" fill={BLUE} />
    <path d="M8 11h19v16H8z" fill="#e9edf5" />
    <path d="M7.5 27V10.5H27" fill="none" stroke="#f7ae2a" strokeDasharray="2 1" />
    <path d="M20 16l8 8-4 .5-4 2.500z" fill={BLUE} />
  </svg>
)

const PointArt = () => (
  <svg width="28" height="28" viewBox="0 0 28 28" aria-hidden="true">
    <path d="M14.5 0v28M0 14.5h28" stroke={PALE} />
    <circle cx="14.5" cy="14.5" r="3.5" fill="#a5a7aa" />
  </svg>
)

const LineArt = () => (
  <svg width="28" height="28" viewBox="0 0 28 28" aria-hidden="true">
    <path d="M2 26L26 2" stroke={PALE} />
    <path d="M.5 24.5h3v3h-3zM24.5.5h3v3h-3z" fill="#fff" stroke={GREY} />
  </svg>
)

const AxisArt = () => (
  <svg width="28" height="28" viewBox="0 0 28 28" aria-hidden="true">
    <path d="M7.5 0v28M14.5 0v28M21.5 0v18M0 7.5h28M0 14.5h28M0 21.5h18" stroke={GREY} />
    <circle cx="22" cy="22" r="3.5" fill="#fff" stroke="#f59a6a" strokeWidth="1.5" />
    <path d="M24 24l3 3" stroke="#f59a6a" strokeWidth="2" />
  </svg>
)

const Branch = ({ last }) => (
  <svg width="26" height="20" viewBox="0 0 26 20" aria-hidden="true">
    <path d={`M8.5 0V${last ? 11 : 20}M8 10.5h18`} fill="none" stroke="#c3c5c8" />
  </svg>
)

const DoubleArrow = () => (
  <svg width="8" height="6" viewBox="0 0 8 6" aria-hidden="true">
    <path d="M0 0l3 3-3 3zM4 0l3 3-3 3z" fill="#555" />
  </svg>
)

const ScrollArrow = ({ left }) => (
  <svg width="5" height="8" viewBox="0 0 5 8" aria-hidden="true">
    <path d={left ? "M5 0v8L0 4z" : "M0 0v8l5-4z"} fill="#222" />
  </svg>
)

const Close = () => (
  <svg width="8" height="8" viewBox="0 0 8 8" aria-hidden="true">
    <path d="M1.500 1.500l5 5M6.500 1.500l-5 5" stroke="#888" strokeWidth="1.5" />
  </svg>
)

const Scroller = ({ thumb }) => (
  <HScroll $thumb={thumb}>
    <ScrollArrow left />
    <div>
      <i />
    </div>
    <ScrollArrow />
  </HScroll>
)

const DockHead = ({ names, active }) => (
  <>
    <DockBar>
      <button aria-label="关闭">
        <Close />
      </button>
    </DockBar>
    <DockTabs>
      {names.map((n, i) => (
        <DockTab key={n} $active={i === active}>
          {n}
        </DockTab>
      ))}
    </DockTabs>
  </>
)

const ink = "#20252b"
const solid = "#4a5665"

const Cube = ({ kind }) => (
  <svg width="24" height="24" viewBox="0 0 24 24" fill={solid} stroke={ink} aria-hidden="true">
    {kind === "orbit" && (
      <>
        <circle cx="12" cy="12.5" r="10" fill="#5d6772" />
        <circle cx="10" cy="9" r="5" fill="#75808c" stroke="none" />
        <path d="M2 17C8 19 17 13 20 6" fill="none" strokeWidth="2" />
        <circle cx="19.5" cy="6" r="4" fill="#65707c" />
        <circle cx="2.500" cy="17" r="2" />
      </>
    )}
    {["3d", "glass", "solid"].includes(kind) && (
      <>
        <path d="M.5 5.5l5-4h18l-5 4zM18.500 5.5l5-4v17l-5 5z" fill={kind === "glass" ? "#566271" : solid} />
        <path d="M.5 5.5h18v18H.5z" fill={kind === "glass" ? "#77879a" : solid} />
      </>
    )}
    {kind === "glass" && <path d="M5.5 5.5v13h13M5.5 18.5l-5 5" fill="none" />}
    {kind === "3d" && (
      <text x="7" y="21" fontSize="9" fontFamily="Liberation Sans" fill={ink} stroke="none">
        3D
      </text>
    )}
    {kind === "turn" && (
      <>
        <path d="M21 15A10 10 0 1 1 19 6" fill="none" strokeWidth="2" />
        <path d="M22 2v6h-6" fill="none" strokeWidth="2" />
      </>
    )}
    {kind === "list" && (
      <>
        <path d="M2.5 1.5h20l1 3v19H.5v-19z" />
        <path d="M.5 4.5h23M12 8v14" />
        <path
          d="M3.5 9.5h3v2h-3zM3.5 14h3v2h-3zM3.5 18.5h3v2h-3zM14.5 9.5h3v2h-3zM14.5 14h3v2h-3zM14.5 18.5h3v2h-3zM8 10.5h2M8 15h2M8 19.5h2M19 10.5h2M19 15h2M19 19.5h2M4 7l1 1 2-2M15 7l1 1 2-2"
          fill="none"
        />
      </>
    )}
  </svg>
)

const quickTools = [
  ["save", "保存"],
  ["print", "打印"],
  ["open", "打开"],
  ["undo", "撤销"],
  [null, "撤销列表"],
  ["redo", "恢复"],
  [null, "恢复列表", PALE],
  ["sigma", "汇总计算"],
  ["calcFind", "查看工程量"],
  ["tableFind", "查看报表"],
  ["tableView", "查看计算式"],
  ["brush", "格式刷"],
  ["gridPale", "三维网格"],
  ["addPage", "添加图纸"],
  [null, "自定义工具栏"],
]

const AppHeader = () => (
  <Header>
    <LogoButton aria-label="菜单">
      <Logo />
    </LogoButton>
    <HeaderRows>
      <TitleRow>
        {quickTools.map(([icon, label, color]) => (
          <QuickButton key={label} $narrow={!icon} aria-label={label}>
            {icon ? <Icon name={icon} /> : <Caret color={color} />}
          </QuickButton>
        ))}
        <Title>广联达BIM土建计量平台 GTJ2018</Title>
        {["minimise", "maximise", "close"].map((name) => (
          <WindowButton key={name} aria-label={name}>
            <Icon name={name} />
          </WindowButton>
        ))}
      </TitleRow>
      <TabRow>
        {tabs.map((t) => (
          <RibbonTab key={t} $active={t === "建模"}>
            {t}
          </RibbonTab>
        ))}
        <SearchBox>
          <input type="text" aria-label="搜索" placeholder="自定义贴面怎么处理复杂零星构件的装修?" />
          <Icon name="find" />
        </SearchBox>
        <UserTools>
          {["avatar", "bell", "chat"].map((name) => (
            <ToolButton key={name} aria-label={name}>
              <Icon name={name} />
            </ToolButton>
          ))}
          <ToolButton aria-label="帮助">
            <Icon name="help" />
            <Caret big color="#aaa" />
          </ToolButton>
          {["shirt", "upBox"].map((name) => (
            <ToolButton key={name} aria-label={name}>
              <Icon name={name} />
            </ToolButton>
          ))}
        </UserTools>
      </TabRow>
    </HeaderRows>
  </Header>
)

const AppRibbon = () => (
  <Ribbon>
    <RibbonGroup name="选择" width={79} left={8} gap={4} caret>
      <BigButton $width={40} $active>
        <SelectArt />
        选择
      </BigButton>
      <Column>
        <Command icon="dropper" title="拾取" />
        <Command icon="listCheck" title="批量选择" />
        <Command icon="listMenu" title="属性选择" />
      </Column>
    </RibbonGroup>
    <RibbonGroup name="CAD操作" width={194} caret>
      <Column>
        <Command icon="findReplace" label="查找替换" />
        <Command icon="scale" label="设置比例" />
        <Command icon="restore" label="还原CAD" />
      </Column>
      <Column>
        <Command icon="floorTable" label="识别楼层表" />
        <Command icon="cadOption" label="CAD识别选项" />
      </Column>
    </RibbonGroup>
    <RibbonGroup name="通用操作" width={108} left={8} gap={8} caret>
      <Column>
        <Command icon="panelOrange" title="定义" />
        <Command icon="cloudFind" title="云检查" />
        <Command icon="lockBlue" title="锁定" caret />
      </Column>
      <Column>
        <Command icon="windows" title="复制到其它层" caret />
        <Command icon="alignTop" title="自动平齐" caret caretColor={PALE} />
        <Command icon="gridSlash" title="转换图元" caret />
      </Column>
      <Column>
        <Command icon="measure" title="两点辅轴" caret />
        <Command icon="savePanel" title="图元存盘" caret />
        <Command icon="funnel" title="图元过滤" />
      </Column>
    </RibbonGroup>
    <RibbonGroup name="修改" width={175} caret>
      <Column>
        <Command icon="copy" label="复制" />
        <Command icon="move" label="移动" />
        <Command icon="mirror" label="镜像" />
      </Column>
      <Column>
        <Command icon="extend" label="延伸" />
        <Command icon="trim" label="修剪" disabled />
        <Command icon="offset" label="偏移" disabled />
      </Column>
      <IconColumns>
        <Column>
          <Command icon="breakTwo" title="打断" disabled />
          <Command icon="joinTwo" title="合并" disabled />
          <Command icon="editFrame" title="分割" />
        </Column>
        <Column>
          <Command icon="alignRight" title="对齐" caret />
          <Command icon="broom" title="删除" />
          <Command icon="rotate" title="旋转" />
        </Column>
      </IconColumns>
    </RibbonGroup>
    <RibbonGroup name="绘图" width={119} left={6} gap={3} caret>
      <BigButton $width={40} disabled>
        <PointArt />
        点
      </BigButton>
      <BigButton $width={40} disabled>
        <LineArt />
        直线
      </BigButton>
      <Column>
        <Command icon="arc" title="弧线" disabled />
        <Command icon="circle" title="圆" disabled />
        <Command icon="rect" title="矩形" disabled />
      </Column>
    </RibbonGroup>
    <RibbonGroup name="识别轴网" width={78}>
      <BigButton $width={50}>
        <AxisArt />
        识别轴网
      </BigButton>
    </RibbonGroup>
    <RibbonGroup name="轴网二次编辑" grow>
      <Column>
        <Command icon="axisDistance" label="修改轴距" />
        <Command icon="axisNumber" label="修改轴号" />
        <Command icon="axisPosition" label="修改轴号位置" />
      </Column>
      <Column>
        <Command icon="scissors" label="修剪轴线" />
        <Command icon="frameCut" label="拉框修剪" caret />
        <Command icon="axisRestore" label="恢复轴线" />
      </Column>
    </RibbonGroup>
  </Ribbon>
)

const DrawingDock = () => (
  <Dock $share={332}>
    <DockHead names={["构件列表", "图纸管理"]} active={1} />
    <DockTools>
      <button>
        <Icon name="addPage" />
        添加图纸
        <CaretSlot>
          <Caret />
        </CaretSlot>
      </button>
      <button>
        <Icon name="split" />
        分割
        <CaretSlot>
          <Caret />
        </CaretSlot>
      </button>
      <button>
        <Icon name="locate" />
        定位
      </button>
      <button aria-label="更多">
        <DoubleArrow />
      </button>
    </DockTools>
    <DockBody>
      <Table $width={269} $head={25}>
        <colgroup>
          <col width="171" />
          <col width="36" />
          <col width="62" />
        </colgroup>
        <thead>
          <tr>
            <th>名称</th>
            <th>锁定</th>
            <th>对应楼层</th>
          </tr>
        </thead>
        <tbody>
          {drawings.map((d) =>
            d.group ? (
              <tr key={d.group}>
                <td colSpan={3}>
                  <NameCell>
                    <Toggle aria-label="折叠">
                      <svg width="8" height="2" aria-hidden="true">
                        <path d="M0 1h8" stroke="#222" />
                      </svg>
                    </Toggle>
                    <CellText>{d.group}</CellText>
                  </NameCell>
                </td>
              </tr>
            ) : (
              <DrawingRow key={d.name} $active={d.active}>
                <td>
                  <NameCell>
                    <Branch last={d.last} />
                    <CellText>{d.name}</CellText>
                  </NameCell>
                </td>
                <td>
                  <Icon name="lock" />
                </td>
                <td>
                  <NameCell>
                    <CellText $inset>{d.floor}</CellText>
                  </NameCell>
                </td>
              </DrawingRow>
            )
          )}
        </tbody>
      </Table>
    </DockBody>
    <Scroller thumb={67} />
  </Dock>
)

const PropertyDock = () => (
  <Dock $share={499}>
    <DockHead names={["属性列表", "图层管理"]} active={0} />
    <GutterTable $width={263} $head={19}>
      <colgroup>
        <col width="22" />
        <col width="101" />
        <col width="140" />
      </colgroup>
      <thead>
        <tr>
          <th aria-label="序号" />
          <th>属性名称</th>
          <th>属性值</th>
        </tr>
      </thead>
      <tbody>
        <tr>
          <td>1</td>
          <td />
          <td />
        </tr>
      </tbody>
    </GutterTable>
    <Gutter />
    <Scroller thumb={93} />
  </Dock>
)

const Canvas = () => (
  <Viewport>
    <Drawing width="440" height="270" viewBox="480 440 440 270" stroke="#800000" shapeRendering="crispEdges">
      {verticals.map(([x, a, b]) => (
        <path key={`v${x}-${a}`} d={`M${x + 0.5} ${a}V${b}`} />
      ))}
      {horizontals.map(([y, a, b]) => (
        <path key={`h${y}-${a}`} d={`M${a} ${y + 0.5}H${b}`} />
      ))}
      <path d="M567 568l9-9" />
    </Drawing>
    <Gizmo width="54" height="54" viewBox="0 0 54 54">
      <path d="M7 24h4v16H7z" fill="#0f0" />
      <path d="M9 15l5 11H4z" fill="#00d800" />
      <path d="M9 42h18v4H9z" fill="#f00" />
      <path d="M38 44l-12-5v10z" fill="#e00000" />
      <circle cx="9" cy="44" r="6" fill="#0000c0" />
      <path d="M41.5 38l7 12M48.5 38l-7 12" stroke="#f00" />
      <path d="M5 2l4 6 4-6M9 8v6" stroke="#0f0" fill="none" />
    </Gizmo>
    <ViewTools>
      <button aria-label="动态观察"><Cube kind="orbit" /></button>
      <button aria-label="三维"><Cube kind="3d" /></button>
      <button aria-label="线框"><Cube kind="glass" /><Caret big color={ink} /></button>
      <button aria-label="实体"><Cube kind="solid" /><Caret big color={ink} /></button>
      <button aria-label="旋转"><Cube kind="turn" /><Caret big color={ink} /></button>
      <hr />
      <button aria-label="显示设置"><Cube kind="list" /></button>
    </ViewTools>
    <Meter />
  </Viewport>
)

const Status = () => (
  <StatusBar>
    <StatusText $width={91}>X = 26192 Y = 6</StatusText>
    <StatusText $width={36}>层高:</StatusText>
    <StatusText $width={39}>3</StatusText>
    <StatusText $width={91}>标高: -0.05~2.95</StatusText>
    <StatusText $width={90}>0</StatusText>
    <StatusText $width={36}>隐藏:</StatusText>
    <StatusText $width={36}>0</StatusText>
    <StatusButton aria-label="正交"><Icon name="ortho" /></StatusButton>
    <StatusButton aria-label="捕捉" $active><Icon name="snap" /><Caret /></StatusButton>
    <StatusButton aria-label="交点"><Icon name="cross" /></StatusButton>
    <StatusButton aria-label="角度"><Icon name="angle" /><Caret /></StatusButton>
    <StatusButton aria-label="动态输入"><Icon name="plusInput" /><Caret /></StatusButton>
    <StatusButton $text>跨图层选择</StatusButton>
    <StatusButton $text>折线选择</StatusButton>
    <StatusText $width={89}>按鼠标左键指定第</StatusText>
    <StatusText>333.333 FPS</StatusText>
    <Grip width="9" height="9" viewBox="0 0 9 9" aria-hidden="true">
      <path d="M6 0h2v2H6zM3 3h2v2H3zM6 3h2v2H6zM0 6h2v2H0zM3 6h2v2H3zM6 6h2v2H6z" fill="#777" />
    </Grip>
  </StatusBar>
)

export default function App() {
  return (
    <>
      <GlobalStyle />
      <Frame>
        <AppHeader />
        <AppRibbon />
        <ComboBar>
          {combos.map(([name, value]) => (
            <Combo key={name}>
              <select aria-label={name} defaultValue={value}>
                <option>{value}</option>
              </select>
              <Caret />
            </Combo>
          ))}
        </ComboBar>
        <Workspace>
          <Sidebar>
            <SidebarTools>
              <AddButton aria-label="新建"><Icon name="plusPlus" /></AddButton>
              <ViewButton aria-label="列表"><Icon name="listView" /></ViewButton>
              <ViewButton aria-label="面板"><Icon name="panelView" /></ViewButton>
            </SidebarTools>
            <Tree>
              {tree.map((n, i) => (
                <TreeItem key={i} $child={n.child}>
                  <TreeButton $child={n.child} $active={n.active}>
                    <Icon name={n.icon} />
                    {n.label}
                  </TreeButton>
                </TreeItem>
              ))}
            </Tree>
          </Sidebar>
          <Docks>
            <DrawingDock />
            <PropertyDock />
            <RedMark width="105" height="60" viewBox="148 354 105 60" fill="none" stroke="#e31b1b" strokeWidth="4" strokeLinecap="round" strokeLinejoin="round">
              <path d="M203 405c13-1 27-2 35-5 8-3 10-7 10-15 0-9-8-17-15-20-7-2-18-1-26-3-9-2-17-4-25-4-12 0-25 2-30 8-2 10 0 26 4 41" />
              <path d="M153 406h85" />
            </RedMark>
            <SplitHandle aria-label="收起面板">
              <svg width="4" height="6" viewBox="0 0 4 6" aria-hidden="true">
                <path d="M4 0v6L0 3z" fill="#c8ccd0" />
              </svg>
            </SplitHandle>
          </Docks>
          <Canvas />
        </Workspace>
        <Status />
      </Frame>
    </>
  )
}
